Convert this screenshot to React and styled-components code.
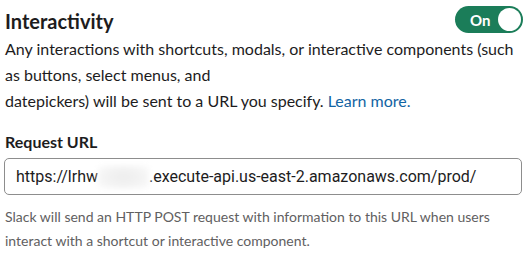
import React from "react";
import styled, { createGlobalStyle } from "styled-components";

const Global = createGlobalStyle`
  html, body { margin: 0; padding: 0; background: #fff; }
  body { font-family: Lato, "Noto Sans", sans-serif; color: #1d1c1d; }
`;

const Page = styled.div`
  width: 530px;
  height: 256px;
  box-sizing: border-box;
  padding: 5px 7px 0 5px;
  overflow: hidden;
`;

const Header = styled.div`
  display: flex;
  align-items: flex-start;
  justify-content: space-between;
  height: 31px;
`;

const Title = styled.h2`
  margin: 0;
  font-size: 20px;
  font-weight: 700;
  line-height: 32px;
`;

const Toggle = styled.div`
  display: flex;
  align-items: center;
  justify-content: space-between;
  box-sizing: border-box;
  width: 68px;
  height: 27px;
  margin-top: 1px;
  padding: 0 2px 0 15px;
  border-radius: 14px;
  background: #1b7d59;
  color: #fff;
  font-size: 15px;
  font-weight: 700;
`;

const Knob = styled.span`
  width: 23px;
  height: 23px;
  border-radius: 50%;
  background: #fff;
`;

const Desc = styled.p`
  margin: 0;
  font-size: 16px;
  line-height: 26px;
  white-space: nowrap;
`;

const Link = styled.a`
  color: #1264a3;
  text-decoration: none;
`;

const Label = styled.div`
  margin-top: 17px;
  font-size: 16px;
  font-weight: 700;
  line-height: 22px;
`;

const Input = styled.div`
  box-sizing: border-box;
  width: 518px;
  height: 37px;
  margin: 5px 0 0 -1px;
  display: flex;
  align-items: center;
  padding: 0 11px;
  border: 1px solid #8d8d8d;
  border-radius: 5px;
  font-family: Roboto, "Liberation Sans", sans-serif;
  font-size: 16px;
  color: #1d1c1d;
  white-space: nowrap;
`;

const Blur = styled.span`
  display: inline-block;
  width: 51px;
  height: 24px;
  background: radial-gradient(ellipse at center, #ededed 0%, #f3f3f3 50%, #fdfdfd 100%);
  filter: blur(2px);
`;

const Help = styled.p`
  margin: 10px 0 0;
  font-size: 14px;
  line-height: 24px;
  color: #616061;
  white-space: nowrap;
`;

export default function App() {
  return (
    <>
      <Global />
      <Page>
        <Header>
          <Title>Interactivity</Title>
          <Toggle>
            <span>On</span>
            <Knob />
          </Toggle>
        </Header>
        <Desc>
          Any interactions with shortcuts, modals, or interactive components (such
          <br />
          as buttons, select menus, and
          <br />
          datepickers) will be sent to a URL you specify. <Link href="#">Learn more.</Link>
        </Desc>
        <Label>Request URL</Label>
        <Input>
          https://lrhw<Blur />.execute-api.us-east-2.amazonaws.com/prod/
        </Input>
        <Help>
          Slack will send an HTTP POST request with information to this URL when users
          <br />
          interact with a shortcut or interactive component.
        </Help>
      </Page>
    </>
  );
}
